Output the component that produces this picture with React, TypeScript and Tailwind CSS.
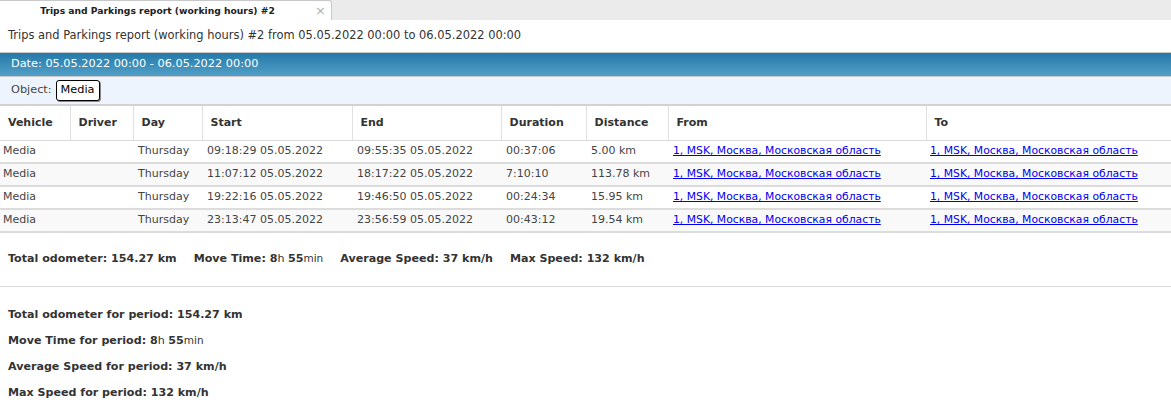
import React from "react";

const rows = [
  ["Media", "", "Thursday", "09:18:29 05.05.2022", "09:55:35 05.05.2022", "00:37:06", "5.00 km"],
  ["Media", "", "Thursday", "11:07:12 05.05.2022", "18:17:22 05.05.2022", "7:10:10", "113.78 km"],
  ["Media", "", "Thursday", "19:22:16 05.05.2022", "19:46:50 05.05.2022", "00:24:34", "15.95 km"],
  ["Media", "", "Thursday", "23:13:47 05.05.2022", "23:56:59 05.05.2022", "00:43:12", "19.54 km"],
];
const addr = "1, MSK, Москва, Московская область";
const headers = ["Vehicle", "Driver", "Day", "Start", "End", "Duration", "Distance", "From", "To"];
const widths = [70, 63, 69, 150, 149, 85, 82, 258, 245];

function Time() {
  return (
    <span>
      <b>8</b>
      <span className="font-normal">h </span>
      <b>55</b>
      <span className="font-normal text-[10.5px]">min</span>
    </span>
  );
}

export default function App() {
  return (
    <div className="w-[1171px] h-[410px] overflow-hidden bg-white text-[#333] text-[11px]" style={{ fontFamily: "'DejaVu Sans', Verdana, sans-serif" }}>
      {/* tab bar */}
      <div className="h-[20px] bg-[#ebebeb] flex">
        <div className="w-[332px] h-[20px] bg-white border-r border-t border-[#c8c8c8] rounded-tr-[3px] flex items-center relative">
          <span className="flex-1 text-center font-bold text-[9.2px] text-[#222] pr-[16px]">Trips and Parkings report (working hours) #2</span>
          <span className="absolute right-[5px] top-[0px] text-[#b0b0b0] text-[13px]">×</span>
        </div>
      </div>
      {/* title */}
      <div className="h-[32px] flex items-center pl-[8px] text-[11.45px] text-[#333]">
        Trips and Parkings report (working hours) #2 from 05.05.2022 00:00 to 06.05.2022 00:00
      </div>
      {/* date bar */}
      <div className="h-[25px] border-t border-b border-[#c9c9c9] bg-gradient-to-b from-[#2479a8] to-[#52a0c8] flex items-center pl-[11px] text-white text-[11.3px]">
        Date: 05.05.2022 00:00 - 06.05.2022 00:00
      </div>
      {/* object row */}
      <div className="h-[29px] bg-[#eef4fd] border-b-2 border-[#d2d2d2] flex items-center pl-[11px] text-[11.3px] text-[#444]">
        <span>Object:</span>
        <span className="ml-[4px] border border-black rounded-[3px] bg-white px-[4px] h-[21px] flex items-center text-black shadow-[1px_1px_0_#888]">Media</span>
      </div>
      {/* table */}
      <table className="table-fixed border-collapse w-[1171px]">
        <colgroup>
          {widths.map((w, i) => (
            <col key={i} style={{ width: w }} />
          ))}
        </colgroup>
        <thead>
          <tr className="h-[34px] border-b border-[#d9d9d9]">
            {headers.map((h, i) => (
              <th key={h} className={`text-left font-bold text-[11px] text-[#333] pl-[8px] ${i < 8 ? "border-r border-[#e0e0e0]" : ""}`}>{h}</th>
            ))}
          </tr>
        </thead>
        <tbody>
          {rows.map((r, ri) => (
            <tr key={ri} className={`h-[23px] border-b-2 border-[#dcdcdc] ${ri % 2 ? "bg-[#f9f9f9]" : "bg-white"}`}>
              {r.map((c, ci) => (
                <td key={ci} className={`text-[11px] text-[#444] whitespace-nowrap ${ci === 0 ? "pl-[3px]" : "pl-[5px]"}`}>{c}</td>
              ))}
              <td className="pl-[5px] text-[10.8px] whitespace-nowrap"><a className="text-[#0000ee] underline">{addr}</a></td>
              <td className="pl-[4px] text-[10.8px] whitespace-nowrap"><a className="text-[#0000ee] underline">{addr}</a></td>
            </tr>
          ))}
        </tbody>
      </table>
      {/* summary */}
      <div className="h-[54px] flex items-center pl-[8px] gap-[17px] font-bold text-[11.1px] text-[#333] border-b border-[#dcdcdc]">
        <span>Total odometer: 154.27 km</span>
        <span>Move Time: <Time /></span>
        <span>Average Speed: 37 km/h</span>
        <span>Max Speed: 132 km/h</span>
      </div>
      <div className="pt-[15px] pl-[8px] flex flex-col font-bold text-[11.1px] text-[#333]">
        <div className="h-[26px] flex items-center">Total odometer for period: 154.27 km</div>
        <div className="h-[26px] flex items-center"><span>Move Time for period:&nbsp;</span><Time /></div>
        <div className="h-[26px] flex items-center">Average Speed for period: 37 km/h</div>
        <div className="h-[26px] flex items-center">Max Speed for period: 132 km/h</div>
      </div>
    </div>
  );
}
